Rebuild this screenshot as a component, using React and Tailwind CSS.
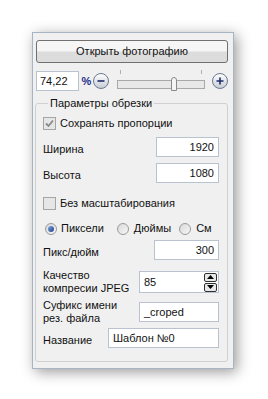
import React from 'react';

const Check = ({ checked }) => (
  <span className="flex h-[13px] w-[13px] items-center justify-center border border-[#a5a5a5] bg-[#e6e6e6]">
    {checked && (
      <svg width="9" height="9" viewBox="0 0 9 9">
        <path d="M1 4.5 L3.5 7 L8 1.5" fill="none" stroke="#8a8a8a" strokeWidth="1.8" />
      </svg>
    )}
  </span>
);

const Radio = ({ on }) => (
  <span className="flex h-[12px] w-[12px] items-center justify-center rounded-full border border-[#9a9a9a] bg-gradient-to-br from-[#d8d8d8] to-[#f8f8f8]">
    {on && <span className="h-[6px] w-[6px] rounded-full bg-gradient-to-br from-[#86a6dc] to-[#1d3f8a]" />}
  </span>
);

const RoundBtn = ({ plus }) => (
  <span className="flex h-[16px] w-[16px] items-center justify-center rounded-full border border-[#6a7890] bg-gradient-to-b from-[#ffffff] to-[#c8ccd4]">
    <svg width="10" height="10" viewBox="0 0 10 10">
      <path d={plus ? 'M1.5 5 H8.5 M5 1.5 V8.5' : 'M1.5 5 H8.5'} stroke="#1c2c6c" strokeWidth="1.6" />
    </svg>
  </span>
);

const Field = ({ value, className = '', right }) => (
  <div className={`flex h-[20px] items-center border border-[#b9c3cf] bg-white px-[4px] ${right ? 'justify-end' : ''} ${className}`}>
    {value}
  </div>
);

export default function App() {
  return (
    <div className="flex h-[399px] w-[268px] bg-white pl-[32px] pt-[32px] font-['Liberation_Sans',sans-serif] text-[11px] leading-[13px] text-[#111]">
      <div className="flex h-[337px] w-[202px] flex-col border border-[#a8b4c4] bg-[#f0f0f0] pl-[3px] pr-[5px] pt-[7px] shadow-[3px_3px_13px_rgba(0,0,0,0.4)]">
        <button className="flex h-[23px] w-[192px] items-center justify-center rounded-[3px] border border-[#707070] bg-gradient-to-b from-[#f6f6f6] from-45% to-[#dcdcdc] to-55%">
          Открыть фотографию
        </button>

        <div className="mt-[8px] flex h-[20px] items-center">
          <Field value="74,22" className="w-[44px] !px-[3px]" />
          <span className="ml-[2px] w-[10px] text-[11px] font-bold text-[#1c2c8c]">%</span>
          <span className="ml-[2px]"><RoundBtn /></span>
          <div className="relative ml-[8px] h-[20px] w-[88px]">
            <span className="absolute left-[3px] top-[-1px] h-[4px] w-px bg-[#b0b0b0]" />
            <span className="absolute right-[2px] top-[-1px] h-[4px] w-px bg-[#b0b0b0]" />
            <span className="absolute left-0 top-[9px] h-[9px] w-[88px] border border-[#a8a8a8] bg-[#e8e8e8]" />
            <span className="absolute left-[54px] top-[6px] h-[14px] w-[6px] rounded-t-[3px] border border-[#8a8a8a] bg-[#f4f4f4]" />
          </div>
          <span className="ml-[8px]"><RoundBtn plus /></span>
        </div>

        <fieldset className="ml-[-1px] mt-[6px] h-[265px] w-[193px] rounded-[3px] border border-[#d0d0d0] pl-[7px] pr-[8px]">
          <legend className="ml-[5px] px-[2px]">Параметры обрезки</legend>

          <label className="mt-[7px] flex items-center gap-[4px]">
            <Check checked />
            <span>Сохранять пропорции</span>
          </label>

          <div className="mt-[7px] flex items-end justify-between">
            <span className="mb-[1px]">Ширина</span>
            <Field value="1920" right className="w-[63px]" />
          </div>
          <div className="mt-[6px] flex items-end justify-between">
            <span className="mb-[1px]">Высота</span>
            <Field value="1080" right className="w-[63px]" />
          </div>

          <label className="mt-[14px] flex items-center gap-[4px]">
            <Check />
            <span>Без масштабирования</span>
          </label>

          <div className="mt-[12px] flex items-center">
            <span className="ml-[2px]"><Radio on /></span>
            <span className="ml-[4px]">Пиксели</span>
            <span className="ml-[13px]"><Radio /></span>
            <span className="ml-[5px]">Дюймы</span>
            <span className="ml-[8px]"><Radio /></span>
            <span className="ml-[5px]">См</span>
          </div>

          <div className="mt-[5px] flex items-end justify-between">
            <span className="mb-[1px]">Пикс/дюйм</span>
            <Field value="300" right className="w-[65px]" />
          </div>

          <div className="mt-[9px] flex items-center justify-between">
            <span className="leading-[13px]">Качество<br />компресии JPEG</span>
            <div className="flex h-[22px] w-[80px] items-center justify-between border border-[#b9c3cf] bg-white pl-[4px] pr-[1px]">
              <span>85</span>
              <span className="flex flex-col gap-px">
                <span className="flex h-[9px] w-[13px] items-center justify-center rounded-[2px] border border-[#303030] bg-[#e8e8e8]">
                  <svg width="7" height="4" viewBox="0 0 7 4"><path d="M0 4 L3.5 0 L7 4Z" fill="#000" /></svg>
                </span>
                <span className="flex h-[9px] w-[13px] items-center justify-center rounded-[2px] border border-[#303030] bg-[#e8e8e8]">
                  <svg width="7" height="4" viewBox="0 0 7 4"><path d="M0 0 L3.5 4 L7 0Z" fill="#000" /></svg>
                </span>
              </span>
            </div>
          </div>

          <div className="mt-[4px] flex items-center justify-between">
            <span className="leading-[13px]">Суфикс имени<br />рез. файла</span>
            <Field value="_croped" className="w-[80px]" />
          </div>

          <div className="mt-[3px] flex items-center justify-between">
            <span className="mt-[4px]">Название</span>
            <Field value="Шаблон №0" className="w-[111px]" />
          </div>
        </fieldset>
      </div>
    </div>
  );
}
